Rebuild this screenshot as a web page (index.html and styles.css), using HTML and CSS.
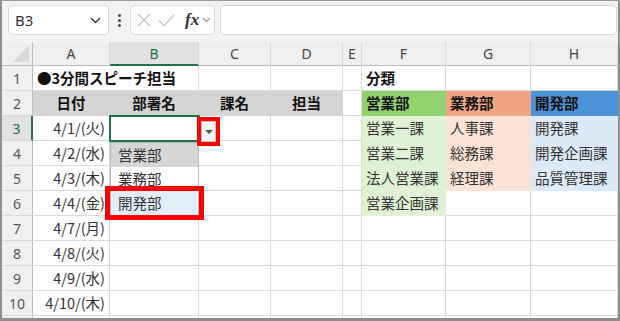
FILE: index.html
```html
<!DOCTYPE html>
<html lang="ja">
<head>
    <meta charset="UTF-8">
    <title>3分間スピーチ担当</title>
    <link rel="stylesheet" href="styles.css">
</head>
<body>
    <div class="frame">
        <!-- Formula bar -->
        <div class="toolbar">
            <div class="namebox">
                <span>B3</span>
                <svg width="11" height="7" viewBox="0 0 11 7"><path d="M1 1 L5.5 5.5 L10 1" fill="none" stroke="#333" stroke-width="1.4"/></svg>
            </div>
            <div class="dots"><i></i><i></i><i></i></div>
            <div class="fxbox">
                <svg width="14" height="14" viewBox="0 0 14 14"><path d="M1 1 L13 13 M13 1 L1 13" stroke="#c4c4c4" stroke-width="1.3"/></svg>
                <svg width="17" height="13" viewBox="0 0 17 13"><path d="M1 6.5 L6 11.5 L16 1" fill="none" stroke="#c4c4c4" stroke-width="1.3"/></svg>
                <span class="fx">fx</span>
                <svg width="9" height="6" viewBox="0 0 9 6"><path d="M1 1 L4.5 4.5 L8 1" fill="none" stroke="#999" stroke-width="1.1"/></svg>
            </div>
            <div class="formula"></div>
        </div>

        <!-- Sheet -->
        <div class="sheet">
            <div class="hd corner"></div>
            <div class="hd">A</div>
            <div class="hd sel">B</div>
            <div class="hd">C</div>
            <div class="hd">D</div>
            <div class="hd">E</div>
            <div class="hd">F</div>
            <div class="hd">G</div>
            <div class="hd">H</div>

            <div class="rh">1</div>
            <div class="c title">●3分間スピーチ担当</div>
            <div class="c"></div>
            <div class="c"></div>
            <div class="c"></div>
            <div class="c bold">分類</div>
            <div class="c"></div>
            <div class="c"></div>

            <div class="rh">2</div>
            <div class="c label">日付</div>
            <div class="c label">部署名</div>
            <div class="c label">課名</div>
            <div class="c label">担当</div>
            <div class="c"></div>
            <div class="c bold green-h">営業部</div>
            <div class="c bold salmon-h">業務部</div>
            <div class="c bold blue-h">開発部</div>

            <div class="rh sel">3</div>
            <div class="c date">4/1/(火)</div>
            <div class="c active"></div>
            <div class="c"></div>
            <div class="c"></div>
            <div class="c"></div>
            <div class="c green">営業一課</div>
            <div class="c salmon">人事課</div>
            <div class="c blue">開発課</div>

            <div class="rh">4</div>
            <div class="c date">4/2/(水)</div>
            <div class="c"></div>
            <div class="c"></div>
            <div class="c"></div>
            <div class="c"></div>
            <div class="c green">営業二課</div>
            <div class="c salmon">総務課</div>
            <div class="c blue">開発企画課</div>

            <div class="rh">5</div>
            <div class="c date">4/3/(木)</div>
            <div class="c"></div>
            <div class="c"></div>
            <div class="c"></div>
            <div class="c"></div>
            <div class="c green">法人営業課</div>
            <div class="c salmon">経理課</div>
            <div class="c blue">品質管理課</div>

            <div class="rh">6</div>
            <div class="c date">4/4/(金)</div>
            <div class="c"></div>
            <div class="c"></div>
            <div class="c"></div>
            <div class="c"></div>
            <div class="c green">営業企画課</div>
            <div class="c"></div>
            <div class="c"></div>

            <div class="rh">7</div>
            <div class="c date">4/7/(月)</div>
            <div class="c"></div><div class="c"></div><div class="c"></div><div class="c"></div><div class="c"></div><div class="c"></div><div class="c"></div>

            <div class="rh">8</div>
            <div class="c date">4/8/(火)</div>
            <div class="c"></div><div class="c"></div><div class="c"></div><div class="c"></div><div class="c"></div><div class="c"></div><div class="c"></div>

            <div class="rh">9</div>
            <div class="c date">4/9/(水)</div>
            <div class="c"></div><div class="c"></div><div class="c"></div><div class="c"></div><div class="c"></div><div class="c"></div><div class="c"></div>

            <div class="rh">10</div>
            <div class="c date">4/10/(木)</div>
            <div class="c"></div><div class="c"></div><div class="c"></div><div class="c"></div><div class="c"></div><div class="c"></div><div class="c"></div>

            <div class="rh"></div>
            <div class="c"></div><div class="c"></div><div class="c"></div><div class="c"></div><div class="c"></div><div class="c"></div><div class="c"></div><div class="c"></div>

            <!-- Validation dropdown -->
            <div class="drop-btn-mark">
                <div class="drop-btn"><span class="tri"></span></div>
            </div>
            <ul class="drop-list">
                <li class="hover">営業部</li>
                <li>業務部</li>
                <li class="pick">開発部</li>
            </ul>
            <div class="pick-mark"></div>
        </div>
    </div>
</body>
</html>
```

FILE: styles.css
```css
* {
    margin: 0;
    padding: 0;
    box-sizing: border-box;
}

body {
    font-family: "Noto Sans CJK JP", "Noto Sans", sans-serif;
    background: #fff;
}

.frame {
    width: 620px;
    height: 321px;
    border-top: 1px solid #9a9a9a;
    border-left: 2px solid #8e8e8e;
    border-right: 2px solid #8e8e8e;
    border-bottom: 3px solid #8e8e8e;
    background: #f3f3f3;
    overflow: hidden;
}

/* Formula bar */
.toolbar {
    height: 41px;
    display: flex;
    align-items: flex-start;
    padding: 4px 0 0 6px;
}

.namebox {
    width: 101px;
    height: 30px;
    background: #fff;
    border: 1px solid #dadada;
    border-radius: 5px;
    display: flex;
    align-items: center;
    justify-content: space-between;
    padding: 0 7px 0 6px;
    font-family: "Noto Sans", sans-serif;
    font-size: 15px;
    color: #333;
}

.dots {
    width: 21px;
    height: 30px;
    display: flex;
    flex-direction: column;
    align-items: center;
    justify-content: center;
    gap: 2px;
}

.dots i {
    width: 3px;
    height: 3px;
    border-radius: 50%;
    background: #444;
}

.fxbox {
    width: 85px;
    height: 30px;
    background: #fff;
    border: 1px solid #dadada;
    border-radius: 5px;
    display: flex;
    align-items: center;
    padding-left: 6px;
    gap: 7px;
}

.fxbox .fx {
    font-family: "Liberation Serif", serif;
    font-style: italic;
    font-weight: bold;
    font-size: 17px;
    color: #333;
    margin-left: 3px;
    margin-right: -4px;
}

.formula {
    flex: 1;
    height: 30px;
    margin-left: 5px;
    margin-right: 1px;
    background: #fff;
    border: 1px solid #d6d6d6;
    border-radius: 4px;
}

/* Sheet grid */
.sheet {
    position: relative;
    display: grid;
    grid-template-columns: 31px 77px 89px 72px 72px 19px 84px 85px 87px;
    grid-template-rows: 24px repeat(11, 25px);
    background: #fff;
}

.hd {
    background: #f0f0f0;
    border-right: 1px solid #dcdcdc;
    border-bottom: 1px solid #bdbdbd;
    font-family: "Noto Sans", sans-serif;
    font-size: 14px;
    color: #444;
    display: flex;
    align-items: center;
    justify-content: center;
}

.hd.sel {
    background: #e1e1e1;
    color: #1e6b3f;
    border-bottom: 2px solid #217346;
}

.hd.corner {
    position: relative;
    border-right: 1px solid #bdbdbd;
}

.hd.corner::after {
    content: "";
    position: absolute;
    right: 3px;
    bottom: 3px;
    width: 16px;
    height: 17px;
    background: #d9d9d9;
    clip-path: polygon(100% 0, 100% 100%, 0 100%);
}

.rh {
    background: #f0f0f0;
    border-right: 1px solid #bdbdbd;
    border-bottom: 1px solid #dadada;
    font-family: "Noto Sans", sans-serif;
    font-size: 14px;
    color: #555;
    display: flex;
    align-items: center;
    justify-content: center;
}

.rh.sel {
    background: #e1e1e1;
    color: #217346;
    border-right: 2px solid #217346;
}

.c {
    border-right: 1px solid #dadada;
    border-bottom: 1px solid #dadada;
    font-size: 14.5px;
    color: #222;
    line-height: 24px;
    padding: 0 4px;
    white-space: nowrap;
}

.title {
    grid-column: span 2;
    font-weight: bold;
    color: #111;
}

.bold {
    font-weight: bold;
    color: #111;
}

.label {
    background: #d4d4d4;
    border-color: #d4d4d4;
    font-weight: bold;
    color: #111;
    text-align: center;
}

.date {
    text-align: right;
    color: #333;
}

.active {
    outline: 2px solid #217346;
    outline-offset: -1px;
    position: relative;
    z-index: 1;
}

.green-h { background: #92d36f; border-color: #92d36f; }
.salmon-h { background: #f2a582; border-color: #f2a582; }
.blue-h { background: #4d91d8; border-color: #4d91d8; }
.green { background: #dff2d5; border-color: #dff2d5; color: #333; }
.salmon { background: #fce3d7; border-color: #fce3d7; color: #333; }
.blue { background: #dce9f6; border-color: #dce9f6; color: #333; }

/* Validation dropdown */
.drop-btn-mark {
    position: absolute;
    left: 195px;
    top: 75px;
    width: 23px;
    height: 29px;
    border: 4px solid #ff0000;
    z-index: 3;
}

.drop-btn {
    width: 100%;
    height: 100%;
    background: #f7f7f7;
    border: 1px solid #c3c3c3;
    display: flex;
    align-items: center;
    justify-content: center;
}

.tri {
    width: 0;
    height: 0;
    border-left: 4px solid transparent;
    border-right: 4px solid transparent;
    border-top: 4px solid #555;
}

.drop-list {
    position: absolute;
    left: 108px;
    top: 100px;
    width: 89px;
    height: 75px;
    list-style: none;
    background: #fff;
    border: 1px solid #b9b9b9;
    z-index: 2;
}

.drop-list li {
    height: 24px;
    line-height: 24px;
    padding-left: 7px;
    font-size: 14.5px;
    color: #333;
}

.drop-list li.hover {
    background: #d6d6d6;
}

.drop-list li.pick {
    height: 25px;
    background: #e1eefa;
}

.pick-mark {
    position: absolute;
    left: 103px;
    top: 144px;
    width: 99px;
    height: 34px;
    border: 5px solid #ff0000;
    z-index: 3;
}
```
